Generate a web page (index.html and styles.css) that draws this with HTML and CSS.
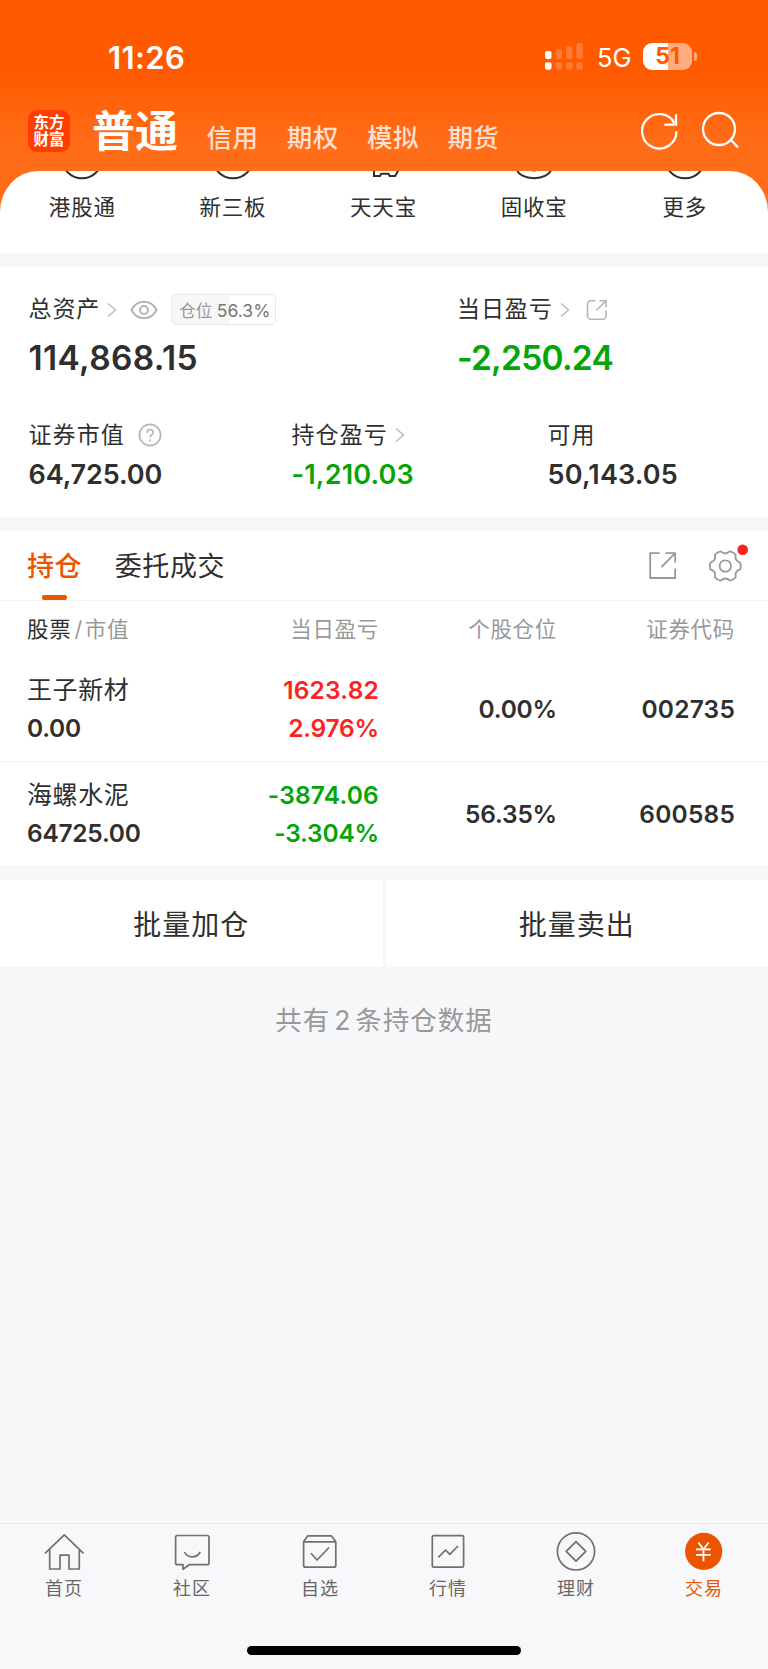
FILE: index.html
```html
<!DOCTYPE html>
<html lang="zh-CN">
<head>
<meta charset="utf-8">
<title>普通交易</title>
<link rel="stylesheet" href="styles.css">
</head>
<body>
<div class="top">
  <div class="status">
    <span class="time">11:26</span>
    <svg class="signal" width="38" height="27" viewBox="0 0 38 27">
      <g fill="#fff"><rect x="0" y="8" width="6.5" height="8" rx="2"/><rect x="0" y="19.3" width="6.5" height="7.4" rx="2"/></g>
      <g fill="#fff" fill-opacity=".2"><rect x="10.5" y="6" width="6.5" height="10" rx="2"/><rect x="21" y="3" width="6.5" height="13" rx="2"/><rect x="31.3" y="0" width="6.5" height="16" rx="2"/><rect x="10.5" y="19.3" width="6.5" height="7.4" rx="2"/><rect x="21" y="19.3" width="6.5" height="7.4" rx="2"/><rect x="31.3" y="19.3" width="6.5" height="7.4" rx="2"/></g>
    </svg>
    <span class="net">5G</span>
    <span class="battery">51</span>
    <span class="nub"></span>
  </div>
  <div class="nav">
    <div class="logo"><span>东方</span><span>财富</span></div>
    <h1 class="nav-main">普通</h1>
    <span class="nav-item">信用</span><span class="nav-item">期权</span><span class="nav-item">模拟</span><span class="nav-item">期货</span>
    <svg class="nav-icons" width="100" height="40" viewBox="638 111 100 40" fill="none" stroke="#fff" stroke-width="2.3">
      <path d="M675.5 131.3A17.2 17.2 0 1 1 673.6 123.4"/><path d="M675 114.3V124.6H663.3"/>
      <circle cx="718" cy="129" r="16"/><path d="M729.4 139.2L737 147.6"/>
    </svg>
  </div>
  <div class="shortcuts">
    <div class="shortcut"><svg width="44" height="9" viewBox="0 0 44 9"><circle cx="22" cy="-12.7" r="20"/></svg>港股通</div>
    <div class="shortcut"><svg width="44" height="9" viewBox="0 0 44 9"><circle cx="22" cy="-12.7" r="20"/></svg>新三板</div>
    <div class="shortcut"><svg width="44" height="9" viewBox="0 0 44 9"><path d="M13 -2V5H19L20.2 2.7H27.5L28.7 5H34.2L37.5 -1"/></svg>天天宝</div>
    <div class="shortcut"><svg width="44" height="9" viewBox="0 0 44 9"><path d="M4.300 -3C6.500 10.500 37.500 10.500 39.700 -3"/><path class="dot" d="M20.500 0H23.500"/></svg>固收宝</div>
    <div class="shortcut"><svg width="44" height="9" viewBox="0 0 44 9"><circle cx="22" cy="-12.7" r="20"/></svg>更多</div>
  </div>
</div>

<section class="assets">
  <div class="row primary">
    <div class="cell">
      <div class="label">总资产
        <svg class="chev" width="10" height="16" viewBox="0 0 10 16"><path d="M1 1.500L8.500 8L1 14.500"/></svg>
        <svg class="eye" width="28" height="20" viewBox="0 0 28 20"><path d="M1.500 10C7 -1 21 -1 26.500 10C21 21 7 21 1.500 10Z"/><circle cx="14" cy="10" r="4"/></svg>
        <span class="tag">仓位 <b>56.3%</b></span>
      </div>
      <div class="big total">114,868.15</div>
    </div>
    <div class="cell">
      <div class="label">当日盈亏
        <svg class="chev" width="10" height="16" viewBox="0 0 10 16"><path d="M1 1.500L8.500 8L1 14.500"/></svg>
        <svg class="share" width="22" height="22" viewBox="0 0 22 22"><path d="M9.500 1.800H5A3.500 3.500 0 0 0 1.500 5.300V16.700A3.500 3.500 0 0 0 5 20.200H16.500A3.500 3.500 0 0 0 20 16.700V11.500M13.500 1.800H20V8M20 1.800L10.500 11.300"/></svg>
      </div>
      <div class="big day down">-2,250.24</div>
    </div>
  </div>
  <div class="row secondary">
    <div class="cell">
      <div class="label">证券市值
        <svg class="help" width="24" height="24" viewBox="0 0 24 24"><circle cx="12" cy="12" r="10.600"/><path d="M9 9.700C9 5.300 15.200 5.600 15.200 9.400C15.200 11.700 12.100 11.800 12.100 14.600M12.100 16.500V18.300"/></svg>
      </div>
      <div class="mid market">64,725.00</div>
    </div>
    <div class="cell">
      <div class="label">持仓盈亏
        <svg class="chev" width="10" height="16" viewBox="0 0 10 16"><path d="M1 1.500L8.500 8L1 14.500"/></svg>
      </div>
      <div class="mid down">-1,210.03</div>
    </div>
    <div class="cell">
      <div class="label">可用</div>
      <div class="mid">50,143.05</div>
    </div>
  </div>
</section>

<section class="holdings">
  <div class="tabs">
    <span class="tab active">持仓</span><span class="tab">委托成交</span>
    <svg class="tab-icons" width="100" height="44" viewBox="646 540 100 44" fill="none" stroke="#999" stroke-width="1.800">
      <path d="M658.700 553.200H649.200V578H674.200V568.500M664.500 553.200H674.200V562.500M674.200 553.200L660.500 567"/>
      <g transform="translate(724.300 566)" stroke-linejoin="round"><path d="M14.900 -3.400Q16.200 0 14.900 3.400Q9 5.200 10.400 11.200Q8.100 14 4.500 14.600Q0 10.400 -4.500 14.600Q-8.100 14 -10.400 11.200Q-9 5.200 -14.900 3.400Q-16.200 0 -14.900 -3.400Q-9 -5.200 -10.400 -11.200Q-8.100 -14 -4.500 -14.600Q0 -10.400 4.500 -14.600Q8.100 -14 10.400 -11.200Q9 -5.200 14.900 -3.400Z"/><circle r="5.700"/></g>
      <circle cx="741.700" cy="549.800" r="5.300" fill="#f82222" stroke="none"/>
    </svg>
  </div>
  <div class="grid head">
    <span class="first"><em>股票</em><i>/</i>市值</span><span>当日盈亏</span><span>个股仓位</span><span>证券代码</span>
  </div>
  <div class="grid stock">
    <div class="first"><div class="name">王子新材</div><div>0.00</div></div>
    <div class="up"><div>1623.82</div><div class="pct">2.976%</div></div>
    <div class="pct">0.00%</div>
    <div>002735</div>
  </div>
  <div class="grid stock">
    <div class="first"><div class="name">海螺水泥</div><div>64725.00</div></div>
    <div class="down"><div>-3874.06</div><div class="pct">-3.304%</div></div>
    <div class="pct">56.35%</div>
    <div>600585</div>
  </div>
</section>

<div class="batch"><div>批量加仓</div><div>批量卖出</div></div>
<p class="count">共有<span>2</span>条持仓数据</p>

<footer class="tabbar">
  <nav class="bar-items">
    <div class="bar-item"><svg width="44" height="44" viewBox="0 0 44 44"><path d="M3 23.300L22.300 4.800L41.500 23.300M7.700 19.500V39H18V25.200H27V39H37.300V19.500"/></svg>首页</div>
    <div class="bar-item"><svg width="44" height="44" viewBox="0 0 44 44"><path d="M7.300 5.500H37.300Q39 5.500 39 7.200V33Q39 34.700 37.300 34.700H19.300L13 39.200V34.700H7.300Q5.600 34.700 5.600 33V7.200Q5.600 5.500 7.300 5.500ZM14.500 22Q16.800 26.800 22.300 26.800Q27.700 26.800 30.200 22"/></svg>社区</div>
    <div class="bar-item"><svg width="44" height="44" viewBox="0 0 44 44"><path d="M9.800 5.800H33.200L37.800 11.800V35.200Q37.800 37.200 35.800 37.200H7.600Q5.600 37.200 5.600 35.200V11.800ZM5.600 11.800H37.800M13 23.300L19 30L31 17.500"/></svg>自选</div>
    <div class="bar-item"><svg width="44" height="44" viewBox="0 0 44 44"><rect x="6.300" y="5.600" width="31.300" height="31.600" rx="1.500"/><path d="M12.300 27.300L19.500 20L23.800 24.300L32 16"/></svg>行情</div>
    <div class="bar-item"><svg width="44" height="44" viewBox="0 0 44 44"><circle cx="22" cy="21.400" r="18.600"/><path d="M22 11.600L31.800 21.400L22 31.200L12.200 21.400Z"/></svg>理财</div>
    <div class="bar-item current"><svg width="44" height="44" viewBox="0 0 44 44"><circle class="disc" cx="21.700" cy="21.400" r="18.600"/><path class="yen" d="M16.300 12.500L21.500 19.300L26.700 12.500M21.500 19.300V31.300M14 19.300H28.800M14 24.800H28.800"/></svg>交易</div>
  </nav>
  <div class="home-indicator"></div>
</footer>
</body>
</html>
```
FILE: styles.css
```css
* { box-sizing: border-box; }
body {
  margin: 0;
  width: 768px;
  height: 1669px;
  display: flex;
  flex-direction: column;
  background: #f6f7f9;
  color: #2f2f2f;
  font-family: Inter, "Noto Sans CJK SC", sans-serif;
  overflow: hidden;
}
svg { display: block; flex: none; fill: none; }
em, i { font-style: normal; }

.top { height: 253px; background: linear-gradient(#ff5a00 0, #ff5a00 72px, #ff6d19 145px, #ff6d19 171px); color: #fff; }
.status { height: 92px; padding: 20px 0 0 108px; display: flex; align-items: center; }
.time { width: 437px; font-size: 31px; font-weight: 600; letter-spacing: .4px; line-height: 72px; padding-top: 3px; }
.net { width: 46px; margin-left: 14px; font-size: 25.500px; padding-top: 3px; }
.battery {
  width: 49px; height: 27px; border-radius: 9px; text-align: center;
  background: linear-gradient(90deg, #fff 51%, rgba(255,255,255,.5) 51%);
  color: #ff5a00; font-size: 23px; font-weight: 700; line-height: 27px;
}
.nub { width: 3px; height: 9px; margin-left: 2px; border-radius: 0 4px 4px 0; background: rgba(255,255,255,.5); }

.nav { height: 79px; padding-left: 28px; display: flex; }
.logo { width: 42px; height: 42px; margin-top: 18px; padding: 4px 0 0 0; border-radius: 9px; background: #ff3d00; display: flex; flex-direction: column; align-items: center; font-size: 15.500px; font-weight: 700; line-height: 17px; }
.nav-main { width: 114.500px; margin: 9px 0 0 22px; font-size: 43px; font-weight: 700; line-height: 60px; white-space: nowrap; }
.nav-item { width: 80.300px; margin-top: 26px; font-size: 25.500px; font-weight: 500; letter-spacing: .4px; line-height: 40px; color: #ffdfcd; }
.nav-icons { margin: 19px 0 0 111px; }

.shortcuts { height: 82px; padding: 0 8px 0 7px; display: grid; grid-template-columns: repeat(5, 1fr); background: #fff; border-radius: 38px 38px 0 0 / 41px 41px 0 0; color: #2f2f2f; }
.shortcut { display: flex; flex-direction: column; align-items: center; font-size: 21.500px; letter-spacing: .8px; line-height: 54px; }
.shortcut svg { stroke: #2f2f2f; stroke-width: 2; }
.shortcut .dot { stroke: #f33; stroke-width: 1.500; }

.assets { height: 250px; margin-top: 14px; padding: 25px 0 0 28.500px; background: #fff; }
.row { display: grid; }
.primary { grid-template-columns: 428.500px 1fr; height: 125px; }
.secondary { grid-template-columns: 263px 256px 1fr; }
.label { height: 35px; display: flex; align-items: center; font-size: 23px; letter-spacing: .9px; line-height: 35px; }
.secondary .label { padding-top: 1px; letter-spacing: 1.100px; }
.big { margin-top: 11px; font-size: 33.500px; font-weight: 600; line-height: 40px; }
.total { letter-spacing: .35px; }
.day { letter-spacing: -.75px; }
.mid { margin-top: 3px; font-size: 27px; font-weight: 600; letter-spacing: .18px; line-height: 40px; }
.market { letter-spacing: -.1px; }
.down { color: #06a506; }
.up { color: #fa2222; }
.chev { margin-left: 7px; stroke: #bcbcbc; stroke-width: 1.500; }
.eye { margin-left: 12.500px; stroke: #b5b5b5; stroke-width: 2; }
.share { margin-left: 16px; stroke: #b5b5b5; stroke-width: 1.600; }
.help { margin-left: 13.500px; stroke: #b5b5b5; stroke-width: 1.700; }
.tag { width: 105px; height: 31px; margin-left: 13.500px; padding-left: 7px; border: 1px solid #e9eaec; border-radius: 5px; background: linear-gradient(90deg, #f6f7f9 56.300%, #fff 56.300%); color: #999; font-size: 16.500px; letter-spacing: 0; line-height: 31px; white-space: nowrap; }
.tag b { font-weight: 400; font-size: 17.500px; color: #777; }

.holdings { height: 334px; margin-top: 14px; background: #fff; }
.tabs { height: 70px; padding-left: 27px; display: flex; border-bottom: 1px solid #f3f4f6; }
.tab { height: 69px; margin-right: 32.500px; font-size: 27px; letter-spacing: .6px; line-height: 71px; }
.tab.active { color: #eb5502; font-weight: 500; display: flex; flex-direction: column; align-items: center; }
.tab.active::after { content: ""; width: 25px; height: 5px; margin-top: -7px; border-radius: 2px; background: #eb5502; }
.tab-icons { margin: 9px 21.500px 0 auto; overflow: visible; }
.grid { display: grid; grid-template-columns: 191px 161px 178px 178px; padding-left: 27px; text-align: right; }
.first { text-align: left; }
.head { height: 55px; font-size: 21.500px; letter-spacing: .7px; line-height: 57px; color: #999; }
.head em { color: #2f2f2f; }
.head i { margin: 0 2px 0 3px; }
.stock { height: 105px; padding-top: 1px; align-content: center; align-items: center; font-size: 24.500px; font-weight: 600; letter-spacing: .2px; line-height: 38px; }
.stock .first { letter-spacing: -.25px; }
.stock .pct { letter-spacing: -.2px; }
.stock + .stock { border-top: 1px solid #f3f4f6; height: 104px; }
.stock .name { font-size: 25px; font-weight: 400; letter-spacing: .6px; }

.batch { height: 87px; margin-top: 15px; display: grid; grid-template-columns: 1fr 1fr; gap: 3px; text-align: center; font-size: 28px; letter-spacing: 1px; line-height: 90px; }
.batch div { height: 87px; background: #fff; }
.count { margin: 33px 0 0; text-align: center; font-size: 26.500px; letter-spacing: 1px; line-height: 40px; color: #999; }
.count span { margin: 0 4px; }

.tabbar { height: 146px; margin-top: auto; padding-top: 6px; border-top: 1px solid #e9ebf0; background: #f8f8fa; }
.bar-items { height: 120px; display: grid; grid-template-columns: repeat(6, 1fr); }
.bar-item { display: flex; flex-direction: column; align-items: center; font-size: 18px; letter-spacing: 1px; line-height: 29px; color: #666; }
.bar-item svg { stroke: #707070; stroke-width: 1.700; stroke-linejoin: round; }
.bar-item.current { color: #eb5502; }
.bar-item .disc { fill: #eb5502; stroke: none; }
.bar-item .yen { stroke: #fff; }
.home-indicator { width: 274px; height: 9px; margin: -4px auto 0; border-radius: 5px; background: #000; }
```
